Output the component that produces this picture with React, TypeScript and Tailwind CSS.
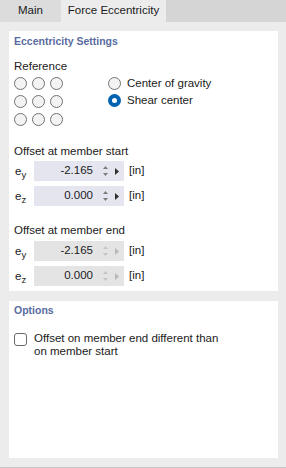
import React from "react";

const Radio = ({ checked = false }: { checked?: boolean }) =>
  checked ? (
    <span className="w-[13px] h-[13px] rounded-full bg-[#0063b1] flex items-center justify-center shrink-0">
      <span className="w-[5px] h-[5px] rounded-full bg-white" />
    </span>
  ) : (
    <span className="w-[13px] h-[13px] rounded-full border border-[#727272] bg-[#f3f3f3] shrink-0" />
  );

const Spinner = ({ disabled }: { disabled: boolean }) => (
  <svg width="5" height="10" viewBox="0 0 5 10" className="ml-[10px]">
    <polygon points="0,3 2.5,0 5,3" fill={disabled ? "#c4c4c4" : "#7a7a7a"} />
    <polygon points="0,7 2.5,10 5,7" fill={disabled ? "#c4c4c4" : "#7a7a7a"} />
  </svg>
);

const Arrow = ({ disabled }: { disabled: boolean }) => (
  <svg width="4" height="7" viewBox="0 0 4 7" className="ml-[7px]">
    <polygon points="0,0 4,3.5 0,7" fill={disabled ? "#b8b8b8" : "#303030"} />
  </svg>
);

type RowProps = { sub: string; value: string; disabled?: boolean };

const ValueRow = ({ sub, value, disabled = false }: RowProps) => (
  <div className="flex items-center h-[20px]">
    <div className="w-[20px] pl-[1px] leading-[14px]">
      e<span className="text-[9.5px] relative top-[3px]">{sub}</span>
    </div>
    <div
      className={
        disabled
          ? "w-[90px] h-[20px] bg-[#e4e4e4] flex items-center"
          : "w-[90px] h-[20px] bg-[#e4e5ef] flex items-center"
      }
    >
      <div className="w-[59px] text-right">{value}</div>
      <Spinner disabled={disabled} />
      <Arrow disabled={disabled} />
    </div>
    <span className="ml-[5px]">[in]</span>
  </div>
);

export default function App() {
  return (
    <div className="w-[286px] h-[468px] bg-[#ececec] flex flex-col overflow-hidden text-[11.5px] text-[#1b1b1b] font-['Liberation_Sans',Arial,sans-serif]">
      {/* tabs */}
      <div className="h-[22px] flex bg-[#d5d5d5] shrink-0">
        <div className="w-[61px] bg-[#dcdcdc] flex items-center justify-center">Main</div>
        <div className="w-[105px] bg-[#ececec] flex items-center justify-center">Force Eccentricity</div>
      </div>

      <div className="flex-1 flex flex-col gap-[10px] pt-[9px] pl-[9px] pr-[8px] pb-[9px] border-b border-[#c9c9c9]">
        {/* eccentricity settings */}
        <div className="h-[260px] bg-white pl-[5px] flex flex-col shrink-0">
          <div className="mt-[3px] leading-[14px] font-bold text-[10.5px] text-[#596ca0]">Eccentricity Settings</div>
          <div className="mt-[11px] leading-[14px]">Reference</div>
          <div className="mt-[4px] flex">
            <div className="grid grid-cols-3 gap-[5px] w-[49px]">
              {Array.from({ length: 9 }).map((_, i) => (
                <Radio key={i} />
              ))}
            </div>
            <div className="ml-[45px] flex flex-col gap-[4px]">
              <div className="flex items-center h-[13px] gap-[6px]">
                <Radio />
                <span className="leading-[13px]">Center of gravity</span>
              </div>
              <div className="flex items-center h-[13px] gap-[6px]">
                <Radio checked />
                <span className="leading-[13px]">Shear center</span>
              </div>
            </div>
          </div>

          <div className="mt-[18px] leading-[14px]">Offset at member start</div>
          <div className="mt-[3px] flex flex-col gap-[5px]">
            <ValueRow sub="y" value="-2.165" />
            <ValueRow sub="z" value="0.000" />
          </div>

          <div className="mt-[17px] leading-[14px]">Offset at member end</div>
          <div className="mt-[4px] flex flex-col gap-[5px]">
            <ValueRow sub="y" value="-2.165" disabled />
            <ValueRow sub="z" value="0.000" disabled />
          </div>
        </div>

        {/* options */}
        <div className="flex-1 bg-white pl-[5px] flex flex-col">
          <div className="mt-[2px] leading-[14px] font-bold text-[10.5px] text-[#596ca0]">Options</div>
          <div className="mt-[15px] flex items-start gap-[7px]">
            <span className="mt-[1px] w-[13px] h-[13px] rounded-[3px] border border-[#6a6a6a] bg-white shrink-0" />
            <span className="leading-[13px]">
              Offset on member end different than
              <br />
              on member start
            </span>
          </div>
        </div>
      </div>
    </div>
  );
}
